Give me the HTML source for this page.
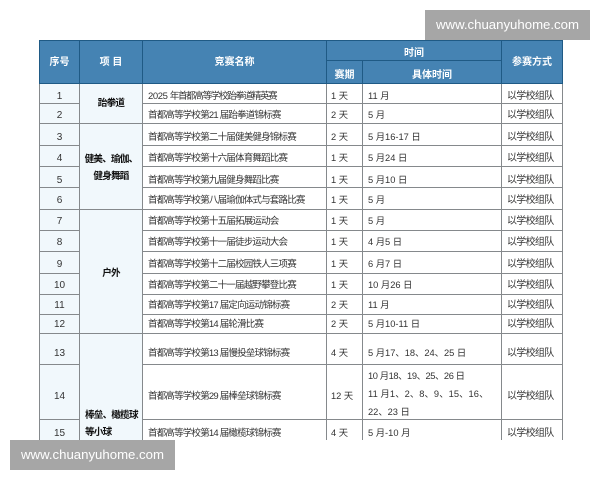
<!DOCTYPE html>
<html lang="zh-CN">
<head>
<meta charset="utf-8">
<title>竞赛</title>
<style>
html,body{margin:0;padding:0;background:#fff;width:600px;height:480px;overflow:hidden}
body{position:relative;font-family:"Liberation Sans","Noto Sans CJK SC",sans-serif}
#clip{position:absolute;left:39px;top:40px;width:524px;height:400px;overflow:hidden}
table{border-collapse:collapse;table-layout:fixed;width:523px;font-size:9.3px;color:#333;filter:blur(.35px)}
td,th{border:1px solid #85898c;padding:0;text-align:center;vertical-align:middle;line-height:13px;overflow:hidden;white-space:nowrap}
th{background:#4583b3;color:#fff;font-size:10px;font-weight:700;border-color:#1f5a85}
th.p{padding-top:6px}
td.c{background:#f1f8fc;font-size:10px}
td.m{background:#f1f8fc;color:#111;font-weight:700;line-height:17px;font-size:9.6px;letter-spacing:-.8px}
td.l{text-align:left;padding-left:5px}
td.n{text-align:left;padding-left:5px;font-size:9.5px;letter-spacing:-.8px}
td.d{text-align:left;padding-left:4px}
td.r{text-align:left;padding-left:5px;font-size:10px;letter-spacing:-.7px}
.wm{position:absolute;width:165px;height:30px;background:#a6a6a6;color:#fff;font-size:13.2px;line-height:30px;text-align:center}
</style>
</head>
<body>
<div id="clip">
<table>
<colgroup><col style="width:40px"><col style="width:63px"><col style="width:184px"><col style="width:36px"><col style="width:139px"><col style="width:61px"></colgroup>
<tr style="height:20px"><th rowspan="2">序号</th><th rowspan="2">项 目</th><th rowspan="2">竞赛名称</th><th colspan="2" class="p">时间</th><th rowspan="2">参赛方式</th></tr>
<tr style="height:23px"><th class="p">赛期</th><th class="p">具体时间</th></tr>
<tr style="height:20px"><td class="c" style="padding-top:6px">1</td><td class="m" rowspan="2">跆拳道</td><td class="n" style="padding-top:6px;letter-spacing:-1.3px"><span style="letter-spacing:-.4px">2025 </span>年首都高等学校跆拳道精英赛</td><td class="d" style="padding-top:6px">1 天</td><td class="l" style="padding-top:6px">11 月</td><td class="r" style="padding-top:6px">以学校组队</td></tr>
<tr style="height:20px"><td class="c" style="padding-top:4px">2</td><td class="n" style="padding-top:4px">首都高等学校第21 届跆拳道锦标赛</td><td class="d" style="padding-top:4px">2 天</td><td class="l" style="padding-top:4px">5 月</td><td class="r" style="padding-top:4px">以学校组队</td></tr>
<tr style="height:22px"><td class="c" style="padding-top:6px">3</td><td class="m" rowspan="4" style="padding-top:3px">健美、瑜伽、<br>健身舞蹈</td><td class="n" style="padding-top:6px">首都高等学校第二十届健美健身锦标赛</td><td class="d" style="padding-top:6px">2 天</td><td class="l" style="padding-top:6px">5 月16-17 日</td><td class="r" style="padding-top:6px">以学校组队</td></tr>
<tr style="height:21px"><td class="c" style="padding-top:5px">4</td><td class="n" style="padding-top:5px">首都高等学校第十六届体育舞蹈比赛</td><td class="d" style="padding-top:5px">1 天</td><td class="l" style="padding-top:5px">5 月24 日</td><td class="r" style="padding-top:5px">以学校组队</td></tr>
<tr style="height:21px"><td class="c" style="padding-top:6px">5</td><td class="n" style="padding-top:6px">首都高等学校第九届健身舞蹈比赛</td><td class="d" style="padding-top:6px">1 天</td><td class="l" style="padding-top:6px">5 月10 日</td><td class="r" style="padding-top:6px">以学校组队</td></tr>
<tr style="height:22px"><td class="c" style="padding-top:4px">6</td><td class="n" style="padding-top:4px">首都高等学校第八届瑜伽体式与套路比赛</td><td class="d" style="padding-top:4px">1 天</td><td class="l" style="padding-top:4px">5 月</td><td class="r" style="padding-top:4px">以学校组队</td></tr>
<tr style="height:21px"><td class="c" style="padding-top:2px">7</td><td class="m" rowspan="6" style="padding-top:4px">户外</td><td class="n" style="padding-top:2px">首都高等学校第十五届拓展运动会</td><td class="d" style="padding-top:2px">1 天</td><td class="l" style="padding-top:2px">5 月</td><td class="r" style="padding-top:2px">以学校组队</td></tr>
<tr style="height:21px"><td class="c" style="padding-top:3px">8</td><td class="n" style="padding-top:3px">首都高等学校第十一届徒步运动大会</td><td class="d" style="padding-top:3px">1 天</td><td class="l" style="padding-top:3px">4 月5 日</td><td class="r" style="padding-top:3px">以学校组队</td></tr>
<tr style="height:22px"><td class="c" style="padding-top:4px">9</td><td class="n" style="padding-top:4px">首都高等学校第十二届校园铁人三项赛</td><td class="d" style="padding-top:4px">1 天</td><td class="l" style="padding-top:4px">6 月7 日</td><td class="r" style="padding-top:4px">以学校组队</td></tr>
<tr style="height:21px"><td class="c" style="padding-top:3px">10</td><td class="n" style="padding-top:3px">首都高等学校第二十一届越野攀登比赛</td><td class="d" style="padding-top:3px">1 天</td><td class="l" style="padding-top:3px">10 月26 日</td><td class="r" style="padding-top:3px">以学校组队</td></tr>
<tr style="height:20px"><td class="c" style="padding-top:2px">11</td><td class="n" style="padding-top:2px">首都高等学校第17 届定向运动锦标赛</td><td class="d" style="padding-top:2px">2 天</td><td class="l" style="padding-top:2px">11 月</td><td class="r" style="padding-top:2px">以学校组队</td></tr>
<tr style="height:19px"><td class="c">12</td><td class="n">首都高等学校第14 届轮滑比赛</td><td class="d">2 天</td><td class="l">5 月10-11 日</td><td class="r">以学校组队</td></tr>
<tr style="height:31px"><td class="c" style="padding-top:8px">13</td><td class="m" rowspan="3" style="vertical-align:top;text-align:left;padding:73px 0 0 5px">棒垒、橄榄球<br>等小球</td><td class="n" style="padding-top:8px">首都高等学校第13 届慢投垒球锦标赛</td><td class="d" style="padding-top:8px">4 天</td><td class="l" style="padding-top:8px">5 月17、18、24、25 日</td><td class="r" style="padding-top:8px">以学校组队</td></tr>
<tr style="height:55px"><td class="c" style="padding-top:8px">14</td><td class="n" style="padding-top:8px">首都高等学校第29 届棒垒球锦标赛</td><td class="d" style="padding-top:8px">12 天</td><td class="l" style="line-height:18px"><div style="position:relative;top:2px"><span style="letter-spacing:-.4px">10 月18、19、25、26 日</span><br><span style="letter-spacing:.1px">11 月1、2、8、9、15、16、</span><br>22、23 日</div></td><td class="r" style="padding-top:8px">以学校组队</td></tr>
<tr style="height:40px"><td class="c" style="vertical-align:top;padding-top:7px">15</td><td class="n" style="vertical-align:top;padding-top:7px">首都高等学校第14 届橄榄球锦标赛</td><td class="d" style="vertical-align:top;padding-top:7px">4 天</td><td class="l" style="vertical-align:top;padding-top:7px">5 月-10 月</td><td class="r" style="vertical-align:top;padding-top:7px">以学校组队</td></tr>
</table>
</div>
<div class="wm" style="left:425px;top:10px">www.chuanyuhome.com</div>
<div class="wm" style="left:10px;top:440px">www.chuanyuhome.com</div>
</body>
</html>
